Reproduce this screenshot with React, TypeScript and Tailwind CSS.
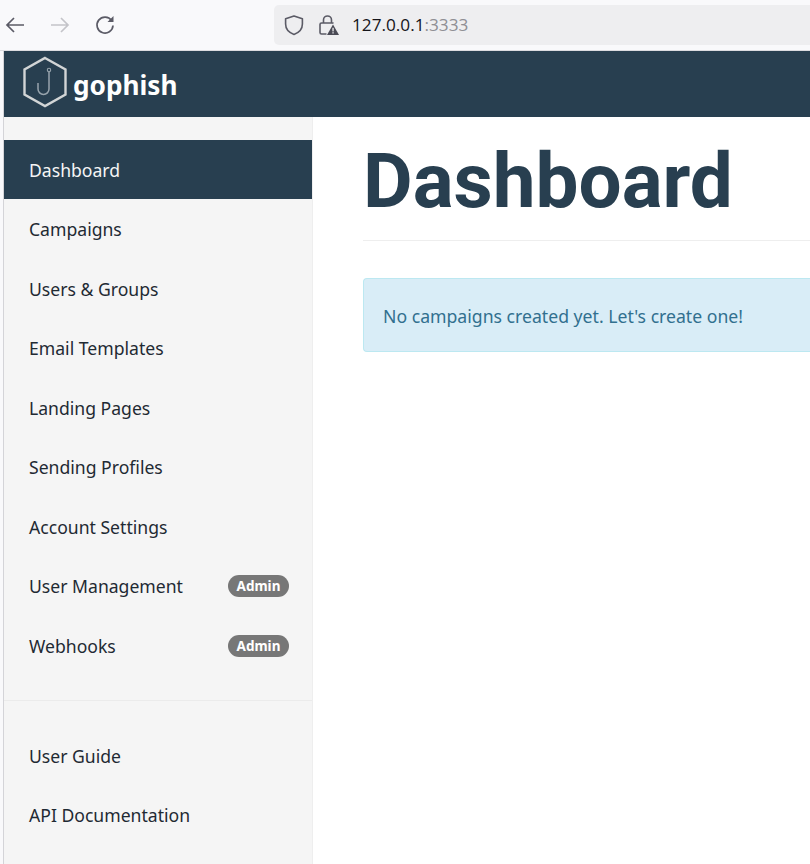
const mainLinks = [
  { label: "Dashboard", active: true },
  { label: "Campaigns" },
  { label: "Users & Groups" },
  { label: "Email Templates" },
  { label: "Landing Pages" },
  { label: "Sending Profiles" },
  { label: "Account Settings" },
  { label: "User Management", admin: true },
  { label: "Webhooks", admin: true },
];

const NavItem = ({ label, active, admin }: { label: string; active?: boolean; admin?: boolean }) => (
  <div
    className={`flex h-[59.45px] items-center justify-between pl-[25px] pr-[23px] text-[17.6px] ${
      active ? "bg-[#283f50] text-[#f5f5f5]" : "text-[#1f2a33]"
    }`}
  >
    <span className="pt-[1px]">{label}</span>
    {admin && (
      <span className="mt-[1px] flex h-[22px] w-[61px] items-center justify-center rounded-full bg-[#777777] text-[13.5px] font-bold text-white">
        Admin
      </span>
    )}
  </div>
);

const App = () => {
  return (
    <div className="flex h-[864px] w-[810px] flex-col overflow-hidden bg-[#f9f9fb] font-['Noto_Sans',sans-serif]">
      {/* browser toolbar */}
      <div className="flex h-[51px] shrink-0 items-center border-b border-[#dcdce0] bg-[#f9f9fb]">
        <svg width="20" height="18" viewBox="0 0 20 18" className="ml-[5px]" fill="none" stroke="#5b5b66" strokeWidth="1.7">
          <path d="M19 9H2M9 2 2 9l7 7" />
        </svg>
        <svg width="20" height="18" viewBox="0 0 20 18" className="ml-[25px]" fill="none" stroke="#c4c4c9" strokeWidth="1.7">
          <path d="M1 9h17M11 2l7 7-7 7" />
        </svg>
        <svg width="20" height="20" viewBox="0 0 20 20" className="ml-[25px]" fill="none">
          <path d="M16.6 5.5A8 8 0 1 0 18 10.5" stroke="#5b5b66" strokeWidth="1.7" />
          <path d="M12.5 7h6V1z" fill="#5b5b66" />
        </svg>
        <div className="mb-[1px] ml-[159px] flex h-[40px] flex-1 items-center rounded-l-[5px] bg-[#eeeef0] pl-[10px]">
          <svg width="20" height="22" viewBox="0 0 20 22" fill="none" stroke="#5b5b66" strokeWidth="1.6">
            <path d="M10 2 18.4 4.8V10c0 5-3.4 8.6-8.4 10.4C5 18.6 1.6 15 1.6 10V4.8z" strokeLinejoin="round" />
          </svg>
          <svg width="22" height="22" viewBox="0 0 22 22" className="ml-[14px]">
            <path d="M5.5 9V6a4 4 0 0 1 8 0v3" fill="none" stroke="#5b5b66" strokeWidth="1.6" />
            <path d="M8.5 20H3.5A1.5 1.5 0 0 1 2 18.5v-8A1.5 1.5 0 0 1 3.5 9h11a1.5 1.5 0 0 1 1 .4" fill="none" stroke="#5b5b66" strokeWidth="1.6" />
            <path d="M15 10.5l6 10.5H9z" fill="#4a4a55" />
            <rect x="14.4" y="13.8" width="1.3" height="3.6" fill="#eeeef0" />
            <rect x="14.4" y="18.2" width="1.3" height="1.3" fill="#eeeef0" />
          </svg>
          <span className="ml-[12px] font-['Open_Sans',sans-serif] text-[17.2px] text-[#15141a]">
            127.0.0.1<span className="text-[#8f8f94]">:3333</span>
          </span>
        </div>
      </div>

      <div className="flex min-h-0 flex-1 pl-[3px]">
        <div className="flex min-w-0 flex-1 flex-col border-l border-[#d4d4d8] bg-white">
          {/* navbar */}
          <div className="flex h-[66px] shrink-0 items-center bg-[#283f50]">
            <svg width="46" height="52" viewBox="0 0 46 52" className="mb-[5px] ml-[18px]">
              <path d="M23 2 L43.5 13.5 V38.5 L23 50 L2.5 38.5 V13.5 Z" fill="none" stroke="#d2d5d6" strokeWidth="2.4" />
              <circle cx="27" cy="14" r="1.7" fill="none" stroke="#98a4ad" strokeWidth="1.1" />
              <path d="M27 16 V33 a5.5 5.5 0 0 1 -11 0 V27" fill="none" stroke="#98a4ad" strokeWidth="1.5" />
            </svg>
            <span className="ml-[5px] mt-[3px] text-[26.2px] font-bold leading-none text-white">gophish</span>
          </div>

          <div className="flex min-h-0 flex-1">
            {/* sidebar */}
            <div className="w-[309px] shrink-0 border-r border-[#eeeeee] bg-[#f5f5f5] pt-[23px]">
              {mainLinks.map((l) => (
                <NavItem key={l.label} {...l} />
              ))}
              <div className="mt-[24.6px] border-t border-[#ebebeb] pt-[25px]">
                <NavItem label="User Guide" />
                <NavItem label="API Documentation" />
              </div>
            </div>

            {/* content */}
            <div className="min-w-0 flex-1 pl-[50px]">
              <h1 className="mt-[24px] h-[99px] font-['Roboto',sans-serif] text-[76.4px] font-bold leading-[80px] text-[#283f50]">
                Dashboard
              </h1>
              <div className="border-t border-[#eeeeee]" />
              <div className="mt-[37px] flex h-[74px] items-center rounded-l-[4px] border border-r-0 border-[#bce8f1] bg-[#d9edf7] pl-[19px] pt-[2px] text-[17.65px] text-[#31708f]">
                No campaigns created yet. Let's create one!
              </div>
            </div>
          </div>
        </div>
      </div>
    </div>
  );
};

export default App;
